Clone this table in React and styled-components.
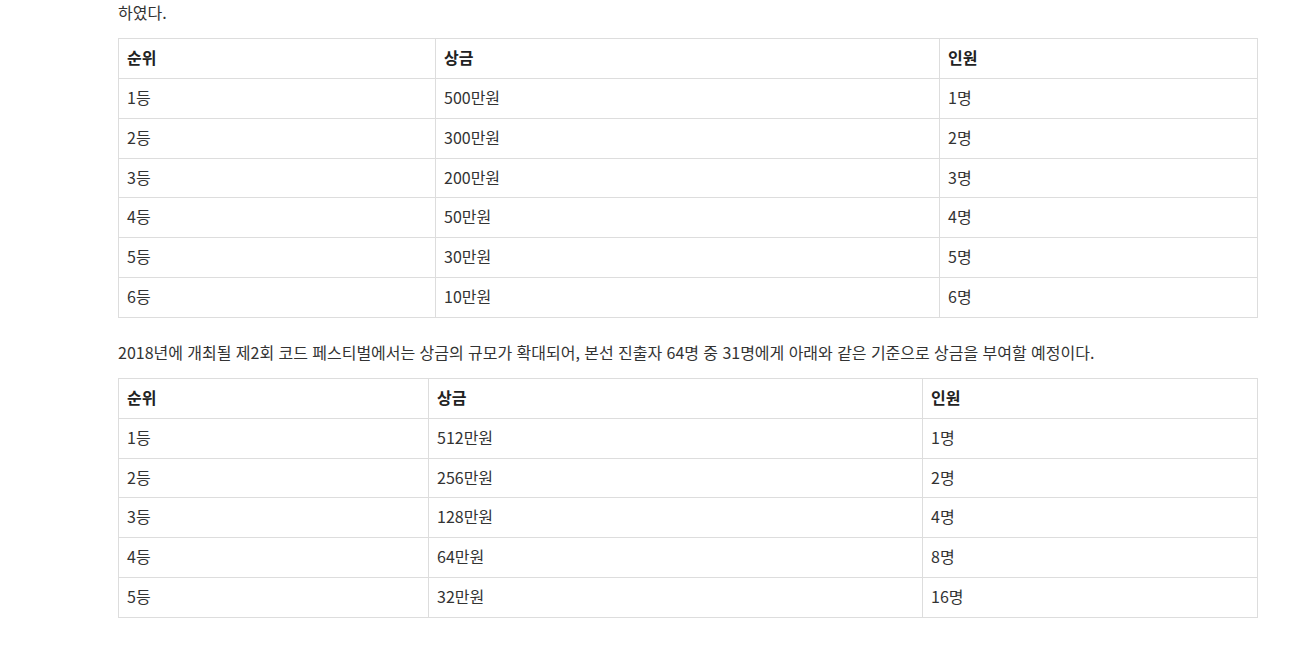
import styled, { createGlobalStyle } from 'styled-components';

const GlobalStyle = createGlobalStyle`
  body {
    margin: 0;
    background: #fff;
    font-family: "Noto Sans CJK KR", "Noto Sans", sans-serif;
    color: #333;
  }
`;

const Article = styled.div`
  width: 1139px;
  padding-left: 118px;
  font-size: 16px;
`;

const Paragraph = styled.p`
  margin: 0 0 14px;
  line-height: 24px;
  word-spacing: 0.75px;
  color: #333;
`;

const Table = styled.table`
  width: 100%;
  border-collapse: collapse;
  table-layout: fixed;
  margin-bottom: 22px;
`;

const Cell = styled.td`
  border: 1px solid #ddd;
  padding: 7px 8px 9px;
  line-height: 22.85px;
  text-align: left;
  font-weight: ${(p) => (p.$head ? 700 : 400)};
  color: ${(p) => (p.$head ? '#222' : '#333')};
`;

const firstPrizes = [
  ['1등', '500만원', '1명'],
  ['2등', '300만원', '2명'],
  ['3등', '200만원', '3명'],
  ['4등', '50만원', '4명'],
  ['5등', '30만원', '5명'],
  ['6등', '10만원', '6명'],
];

const secondPrizes = [
  ['1등', '512만원', '1명'],
  ['2등', '256만원', '2명'],
  ['3등', '128만원', '4명'],
  ['4등', '64만원', '8명'],
  ['5등', '32만원', '16명'],
];

function PrizeTable({ rows, widths }) {
  return (
    <Table>
      <colgroup>
        {widths.map((w) => (
          <col key={w} style={{ width: w }} />
        ))}
      </colgroup>
      <thead>
        <tr>
          <Cell as="th" $head>순위</Cell>
          <Cell as="th" $head>상금</Cell>
          <Cell as="th" $head>인원</Cell>
        </tr>
      </thead>
      <tbody>
        {rows.map((r) => (
          <tr key={r[0]}>
            {r.map((c, i) => (
              <Cell key={i}>{c}</Cell>
            ))}
          </tr>
        ))}
      </tbody>
    </Table>
  );
}

export default function App() {
  return (
    <>
      <GlobalStyle />
      <Article>
        <Paragraph>하였다.</Paragraph>
        <PrizeTable rows={firstPrizes} widths={[317, 504, 318]} />
        <Paragraph>
          2018년에 개최될 제2회 코드 페스티벌에서는 상금의 규모가 확대되어, 본선 진출자 64명 중 31명에게 아래와 같은 기준으로 상금을 부여할 예정이다.
        </Paragraph>
        <PrizeTable rows={secondPrizes} widths={[310, 494, 335]} />
      </Article>
    </>
  );
}
